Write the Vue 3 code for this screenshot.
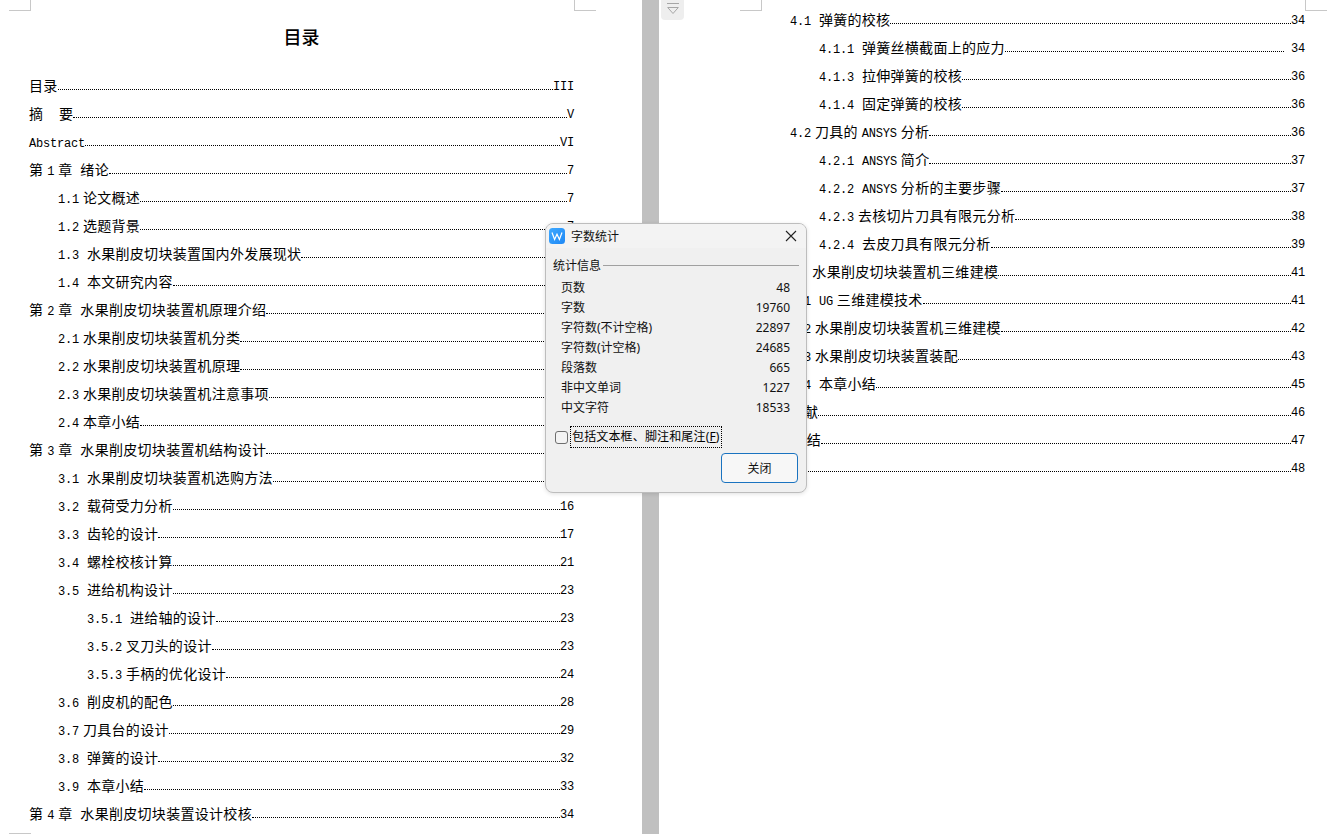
<script setup>
const left = [
  [0, '目录', 'III'], [0, '摘    要', 'V'], [0, 'Abstract', 'VI'], [0, '第 1 章  绪论', '7'],
  [1, '1.1 论文概述', '7'], [1, '1.2 选题背景', '7'], [1, '1.3  水果削皮切块装置国内外发展现状', '8'], [1, '1.4  本文研究内容', '9'],
  [0, '第 2 章  水果削皮切块装置机原理介绍', '10'], [1, '2.1 水果削皮切块装置机分类', '10'], [1, '2.2 水果削皮切块装置机原理', '11'],
  [1, '2.3 水果削皮切块装置机注意事项', '12'], [1, '2.4 本章小结', '13'],
  [0, '第 3 章  水果削皮切块装置机结构设计', '14'], [1, '3.1  水果削皮切块装置机选购方法', '14'], [1, '3.2  载荷受力分析', '16'],
  [1, '3.3  齿轮的设计', '17'], [1, '3.4  螺栓校核计算', '21'], [1, '3.5  进给机构设计', '23'],
  [2, '3.5.1  进给轴的设计', '23'], [2, '3.5.2 叉刀头的设计', '23'], [2, '3.5.3 手柄的优化设计', '24'],
  [1, '3.6  削皮机的配色', '28'], [1, '3.7 刀具台的设计', '29'], [1, '3.8  弹簧的设计', '32'], [1, '3.9  本章小结', '33'],
  [0, '第 4 章  水果削皮切块装置设计校核', '34']
]
const right = [
  [1, '4.1  弹簧的校核', '34'], [2, '4.1.1  弹簧丝横截面上的应力', ' 34'], [2, '4.1.3  拉伸弹簧的校核', '36'], [2, '4.1.4  固定弹簧的校核', '36'],
  [1, '4.2 刀具的 ANSYS 分析', '36'], [2, '4.2.1  ANSYS 简介', '37'], [2, '4.2.2  ANSYS 分析的主要步骤', '37'],
  [2, '4.2.3 去核切片刀具有限元分析', '38'], [2, '4.2.4  去皮刀具有限元分析', '39'],
  [0, '第 5 章  水果削皮切块装置机三维建模', '41'], [1, '5.1  UG 三维建模技术', '41'], [1, '5.2 水果削皮切块装置机三维建模', '42'],
  [1, '5.3 水果削皮切块装置装配', '43'], [1, '5.4  本章小结', '45'],
  [0, '参考文献', '46'], [0, '总        结', '47'], [0, '致谢', '48']
]
const tokens = (s) => s.split(/([A-Za-z0-9.]+)/).filter(Boolean).map((t) => ({ t, latin: /^[A-Za-z0-9.]+$/.test(t) }))
const stats = [
  ['页数', '48'], ['字数', '19760'], ['字符数(不计空格)', '22897'], ['字符数(计空格)', '24685'],
  ['段落数', '665'], ['非中文单词', '1227'], ['中文字符', '18533']
]
</script>

<template>
  <div class="screen">
    <section class="page page-left">
      <i class="mark tl"></i><i class="mark tr"></i><i class="mark bl"></i>
      <h1 class="title">目录</h1>
      <div v-for="r in left" :key="r[1]" class="row" :class="'lv' + r[0]">
        <span class="label"><span v-for="(k, i) in tokens(r[1])" :key="i" :class="{ latin: k.latin }">{{ k.t }}</span></span>
        <span class="leader"></span>
        <span class="num latin">{{ r[2] }}</span>
      </div>
    </section>
    <div class="gutter"></div>
    <section class="page page-right">
      <i class="mark rtl"></i><i class="mark rtr"></i>
      <div class="tab">
        <svg width="12" height="15" viewBox="0 0 12 15" fill="none" stroke="#a6a6a6" stroke-width="1">
          <path d="M0 3.5h12" />
          <path d="M.7 7.5h10.6L6 13.5z" />
        </svg>
      </div>
      <div v-for="r in right" :key="r[1]" class="row" :class="'lv' + r[0]">
        <span class="label"><span v-for="(k, i) in tokens(r[1])" :key="i" :class="{ latin: k.latin }">{{ k.t }}</span></span>
        <span class="leader"></span>
        <span class="num latin">{{ r[2] }}</span>
      </div>
    </section>

    <div class="dialog">
      <header class="head">
        <svg class="logo" width="16" height="16" viewBox="0 0 16 16">
          <defs>
            <linearGradient id="wg" x1="0" y1="0" x2="1" y2="1">
              <stop offset="0" stop-color="#3fa9ff" />
              <stop offset="1" stop-color="#1e88f5" />
            </linearGradient>
          </defs>
          <rect width="16" height="16" rx="3.5" fill="url(#wg)" />
          <path d="M3 4.5l2.6 7L8 6.2l2.4 5.3 2.6-7" fill="none" stroke="#fff" stroke-width="1.2" />
        </svg>
        <span class="head-title">字数统计</span>
        <svg class="close" width="12" height="12" viewBox="0 0 12 12" stroke="#222" stroke-width="1.1">
          <path d="M1 1l10 10M11 1L1 11" />
        </svg>
      </header>
      <div class="body">
        <div class="group"><span>统计信息</span><i></i></div>
        <div class="stats">
          <div v-for="s in stats" :key="s[0]" class="stat"><span>{{ s[0] }}</span><span>{{ s[1] }}</span></div>
        </div>
        <div class="check">
          <span class="box"></span>
          <span class="check-label">包括文本框、脚注和尾注(<u>F</u>)</span>
        </div>
        <div class="actions"><button class="btn" type="button">关闭</button></div>
      </div>
    </div>
  </div>
</template>

<style>
html, body { margin: 0; background: #fff; overflow: hidden; }
</style>

<style scoped>
.screen {
  position: relative;
  display: flex;
  width: 1335px;
  height: 834px;
  overflow: hidden;
  background: #fff;
  color: #000;
  font-family: "Noto Sans CJK SC", "Liberation Sans", sans-serif;
}
.page { position: relative; box-sizing: border-box; height: 834px; background: #fff; }
.page-left { width: 642px; padding: 0 68px 0 29px; }
.page-right { flex: 1; padding: 6px 30px 0 102px; }
.gutter { width: 17px; background: #c0c0c0; }
.title {
  margin: 0;
  height: 72px;
  padding-top: 22px;
  box-sizing: border-box;
  text-align: center;
  font-size: 18px;
  line-height: 28px;
  font-weight: 500;
}
.row { display: flex; height: 28px; font-size: 14px; white-space: pre; letter-spacing: .3px; word-spacing: .5px; }
.label { flex: none; line-height: 26px; }
.num { flex: none; line-height: 31px; }
.lv1 { padding-left: 29px; }
.lv2 { padding-left: 58px; }
.leader { flex: 1; height: 17px; border-bottom: 1px dotted #000; }
.latin { font-family: "Liberation Mono", monospace; font-size: 12px; letter-spacing: -.2px; word-spacing: 0; }

.mark { position: absolute; display: block; box-sizing: border-box; height: 11px; width: 22px; border: 0 solid #c8c8c8; }
.tl { left: 9px; top: 0; border-width: 0 1px 1px 0; }
.tr { left: 574px; top: 0; border-width: 0 0 1px 1px; }
.bl { left: 9px; top: 833px; border-width: 1px 1px 0 0; }
.rtl { left: 81px; top: 0; border-width: 0 1px 1px 0; }
.rtr { left: 646px; top: 0; border-width: 0 0 1px 1px; }
.tab {
  position: absolute;
  left: 2px;
  top: 0;
  display: flex;
  justify-content: center;
  width: 23px;
  height: 20px;
  background: #eeeeee;
  border-radius: 0 0 4px 4px;
}

.dialog {
  position: absolute;
  left: 545px;
  top: 223px;
  box-sizing: border-box;
  width: 262px;
  height: 270px;
  background: #f0f0f0;
  border: 1px solid #bdbdbd;
  border-radius: 8px;
  box-shadow: 0 1px 4px rgba(0, 0, 0, .12);
  font-family: "Noto Sans", "Noto Sans CJK SC", sans-serif;
  font-size: 12px;
  color: #111;
  overflow: hidden;
}
.head { display: flex; align-items: center; height: 24px; padding: 0 9px 0 3px; background: #f3f3f3; }
.logo { flex: none; }
.head-title { margin-left: 6px; flex: 1; }
.close { flex: none; }
.body { padding: 7px 7px 0 7px; }
.group { display: flex; align-items: center; height: 20px; gap: 2px; }
.group i { flex: 1; height: 1px; background: #a0a0a0; }
.stats { padding: 3px 9px 0 8px; }
.stat { display: flex; justify-content: space-between; height: 20px; line-height: 20px; }
.check { display: flex; align-items: center; margin-top: 8px; height: 22px; padding-left: 2px; }
.box {
  box-sizing: border-box;
  width: 13px;
  height: 13px;
  background: #f3f3f3;
  border: 1px solid #6e6e6e;
  border-radius: 3px;
}
.check-label { margin-left: 3px; padding: 0 1px; line-height: 20px; letter-spacing: .15px; outline: 1px dotted #000; color: #000; }
.actions { display: flex; justify-content: flex-end; margin-top: 5px; padding-right: 1px; }
.btn {
  width: 77px;
  height: 30px;
  padding: 0;
  background: #f7f7f7;
  border: 1px solid #1a73c0;
  border-radius: 4px;
  color: #111;
  font: inherit;
}
</style>
